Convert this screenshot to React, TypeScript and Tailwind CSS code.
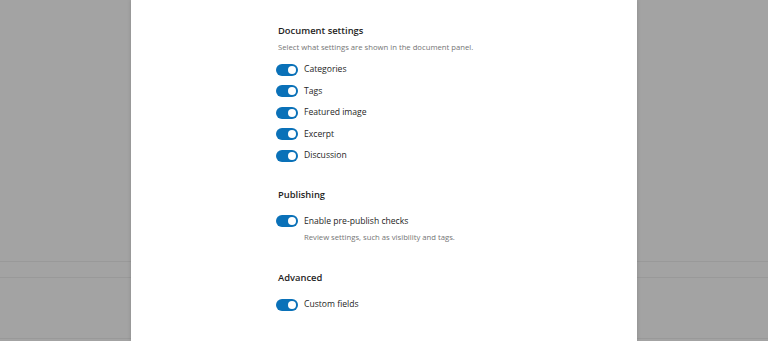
import React from "react";

function Toggle() {
  return (
    <span className="relative ml-[-2px] inline-flex h-[12px] w-[22px] shrink-0 items-center rounded-full bg-[#0a71b8]">
      <span className="absolute right-[2px] h-[8px] w-[8px] rounded-full bg-white" />
    </span>
  );
}

function Row({ label }: { label: string }) {
  return (
    <div className="flex h-[21.5px] items-center gap-[6px]">
      <Toggle />
      <span className="text-[8.6px] text-[#1e1e1e]">{label}</span>
    </div>
  );
}

export default function App() {
  return (
    <div
      className="relative h-[341px] w-[768px] overflow-hidden bg-[#a3a3a3]"
      style={{ fontFamily: '"Open Sans", "Noto Sans", sans-serif' }}
    >
      <div className="flex h-full flex-col">
        <div className="h-[261px]" />
        <div className="h-[17px] border-y border-[#999999]" />
        <div className="flex-1" />
        <div className="h-[3px] border-t border-[#999999]" />
      </div>
      <div className="absolute left-[131px] top-0 h-full w-[506px] bg-white shadow-[0_0_4px_rgba(0,0,0,0.15)]">
        <div className="pl-[147px] pt-[24px]">
          <h2 className="text-[9.4px] font-semibold leading-[14px] text-[#1e1e1e]">Document settings</h2>
          <p className="mt-[4px] text-[7.7px] leading-[11px] text-[#757575]">
            Select what settings are shown in the document panel.
          </p>
          <div className="mt-[6px] flex flex-col">
            <Row label="Categories" />
            <Row label="Tags" />
            <Row label="Featured image" />
            <Row label="Excerpt" />
            <Row label="Discussion" />
          </div>
          <h2 className="mt-[21px] text-[9.4px] font-semibold leading-[14px] text-[#1e1e1e]">Publishing</h2>
          <div className="mt-[9px]">
            <Row label="Enable pre-publish checks" />
            <p className="pl-[26px] text-[7.7px] leading-[11px] text-[#757575]">
              Review settings, such as visibility and tags.
            </p>
          </div>
          <h2 className="mt-[28px] text-[9.4px] font-semibold leading-[14px] text-[#1e1e1e]">Advanced</h2>
          <div className="mt-[9px]">
            <Row label="Custom fields" />
          </div>
        </div>
      </div>
    </div>
  );
}
